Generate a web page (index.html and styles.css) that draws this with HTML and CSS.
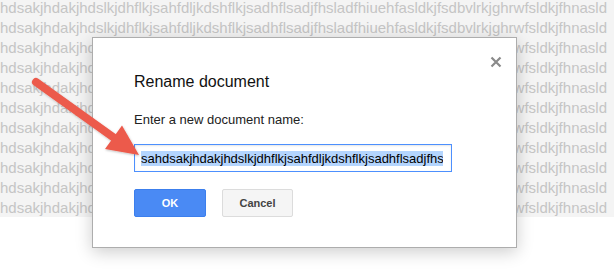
FILE: index.html
```html
<!DOCTYPE html>
<html>
<head>
<meta charset="utf-8">
<link rel="stylesheet" href="styles.css">
</head>
<body>
<div class="doc">
  <div class="doc-lines">
    <div>hdsakjhdakjhdslkjdhflkjsahfdljkdshflkjsadhflsadjfhsladfhiuehfasldkjfsdbvlrkjghrwfsldkjfhnasld</div>
    <div>hdsakjhdakjhdslkjdhflkjsahfdljkdshflkjsadhflsadjfhsladfhiuehfasldkjfsdbvlrkjghrwfsldkjfhnasld</div>
    <div>hdsakjhdakjhdslkjdhflkjsahfdljkdshflkjsadhflsadjfhsladfhiuehfasldkjfsdbvlrkjghrwfsldkjfhnasld</div>
    <div>hdsakjhdakjhdslkjdhflkjsahfdljkdshflkjsadhflsadjfhsladfhiuehfasldkjfsdbvlrkjghrwfsldkjfhnasld</div>
    <div>hdsakjhdakjhdslkjdhflkjsahfdljkdshflkjsadhflsadjfhsladfhiuehfasldkjfsdbvlrkjghrwfsldkjfhnasld</div>
    <div>hdsakjhdakjhdslkjdhflkjsahfdljkdshflkjsadhflsadjfhsladfhiuehfasldkjfsdbvlrkjghrwfsldkjfhnasld</div>
    <div>hdsakjhdakjhdslkjdhflkjsahfdljkdshflkjsadhflsadjfhsladfhiuehfasldkjfsdbvlrkjghrwfsldkjfhnasld</div>
    <div>hdsakjhdakjhdslkjdhflkjsahfdljkdshflkjsadhflsadjfhsladfhiuehfasldkjfsdbvlrkjghrwfsldkjfhnasld</div>
    <div>hdsakjhdakjhdslkjdhflkjsahfdljkdshflkjsadhflsadjfhsladfhiuehfasldkjfsdbvlrkjghrwfsldkjfhnasld</div>
    <div>hdsakjhdakjhdslkjdhflkjsahfdljkdshflkjsadhflsadjfhsladfhiuehfasldkjfsdbvlrkjghrwfsldkjfhnasld</div>
    <div>hdsakjhdakjhdslkjdhflkjsahfdljkdshflkjsadhflsadjfhsladfhiuehfasldkjfsdbvlrkjghrwfsldkjfhnasld</div>
  </div>
</div>

<div class="dialog">
  <svg class="close" width="12" height="12" viewBox="0 0 12 12">
    <path d="M1.5 1.5 L10.5 10.5 M10.5 1.5 L1.5 10.5" stroke="#8a8a8a" stroke-width="2.2" fill="none"/>
  </svg>
  <div class="title">Rename document</div>
  <div class="label">Enter a new document name:</div>
  <div class="field">
    <div class="field-inner"><span class="sel">sahdsakjhdakjhdslkjdhflkjsahfdljkdshflkjsadhflsadjfhsladfhiuehfasldkjfsdbvlrkjghrwfsldkjfhnasld</span></div>
  </div>
  <div class="buttons">
    <div class="btn btn-ok">OK</div>
    <div class="btn btn-cancel">Cancel</div>
  </div>
</div>

<svg class="arrow" width="616" height="278" viewBox="0 0 616 278">
  <defs>
    <filter id="sh" x="-20%" y="-20%" width="140%" height="140%">
      <feDropShadow dx="0.5" dy="1" stdDeviation="1" flood-color="#000" flood-opacity="0.25"/>
    </filter>
  </defs>
  <g filter="url(#sh)" fill="#ec5a4b">
    <path d="M36 82 L113.6 137.5" stroke="#ec5a4b" stroke-width="8" stroke-linecap="round"/>
    <polygon points="139,155 105,149 122,125.5"/>
  </g>
</svg>
</body>
</html>
```

FILE: styles.css
```css
html, body {
  margin: 0;
  padding: 0;
}
body {
  width: 616px;
  height: 278px;
  background: #ffffff;
  position: relative;
  overflow: hidden;
  font-family: "Liberation Sans", Arial, sans-serif;
}
.doc {
  width: 614px;
  height: 217px;
  background: #f4f4f4;
  overflow: hidden;
  color: #c5c5c5;
  font-size: 15px;
  line-height: 20px;
  white-space: nowrap;
}
.doc-lines {
  margin-top: -2px;
  padding-left: 0;
}
.dialog {
  position: absolute;
  left: 92px;
  top: 37px;
  width: 425px;
  height: 211px;
  box-sizing: border-box;
  background: #ffffff;
  border: 1px solid #adadad;
  box-shadow: 0 4px 16px rgba(0, 0, 0, 0.2);
  padding: 34px 42px 0 41px;
}
.close {
  position: absolute;
  top: 18px;
  right: 14px;
}
.title {
  font-size: 16px;
  line-height: 20px;
  color: #111;
}
.label {
  margin-top: 20px;
  font-size: 13px;
  line-height: 16px;
  color: #222;
}
.field {
  margin-top: 16px;
  width: 318px;
  height: 28px;
  box-sizing: border-box;
  border: 1px solid #4d90fe;
  box-shadow: inset 0 1px 2px rgba(0, 0, 0, 0.1);
  padding: 0 8px 0 6px;
  display: flex;
  align-items: center;
}
.field-inner {
  flex: 1;
  overflow: hidden;
  white-space: nowrap;
  font-size: 13px;
  line-height: 15px;
  color: #000;
}
.sel {
  background: #b4d5fe;
}
.buttons {
  margin-top: 17px;
  display: flex;
  gap: 16px;
}
.btn {
  height: 28px;
  box-sizing: border-box;
  border-radius: 2px;
  display: flex;
  align-items: center;
  justify-content: center;
  font-size: 11px;
  font-weight: bold;
}
.btn-ok {
  width: 72px;
  background: #4a8af4;
  border: 1px solid #3c7fed;
  color: #ffffff;
}
.btn-cancel {
  width: 71px;
  background: #f5f5f5;
  border: 1px solid #dcdcdc;
  color: #444;
}
.arrow {
  position: absolute;
  left: 0;
  top: 0;
  pointer-events: none;
}
```
